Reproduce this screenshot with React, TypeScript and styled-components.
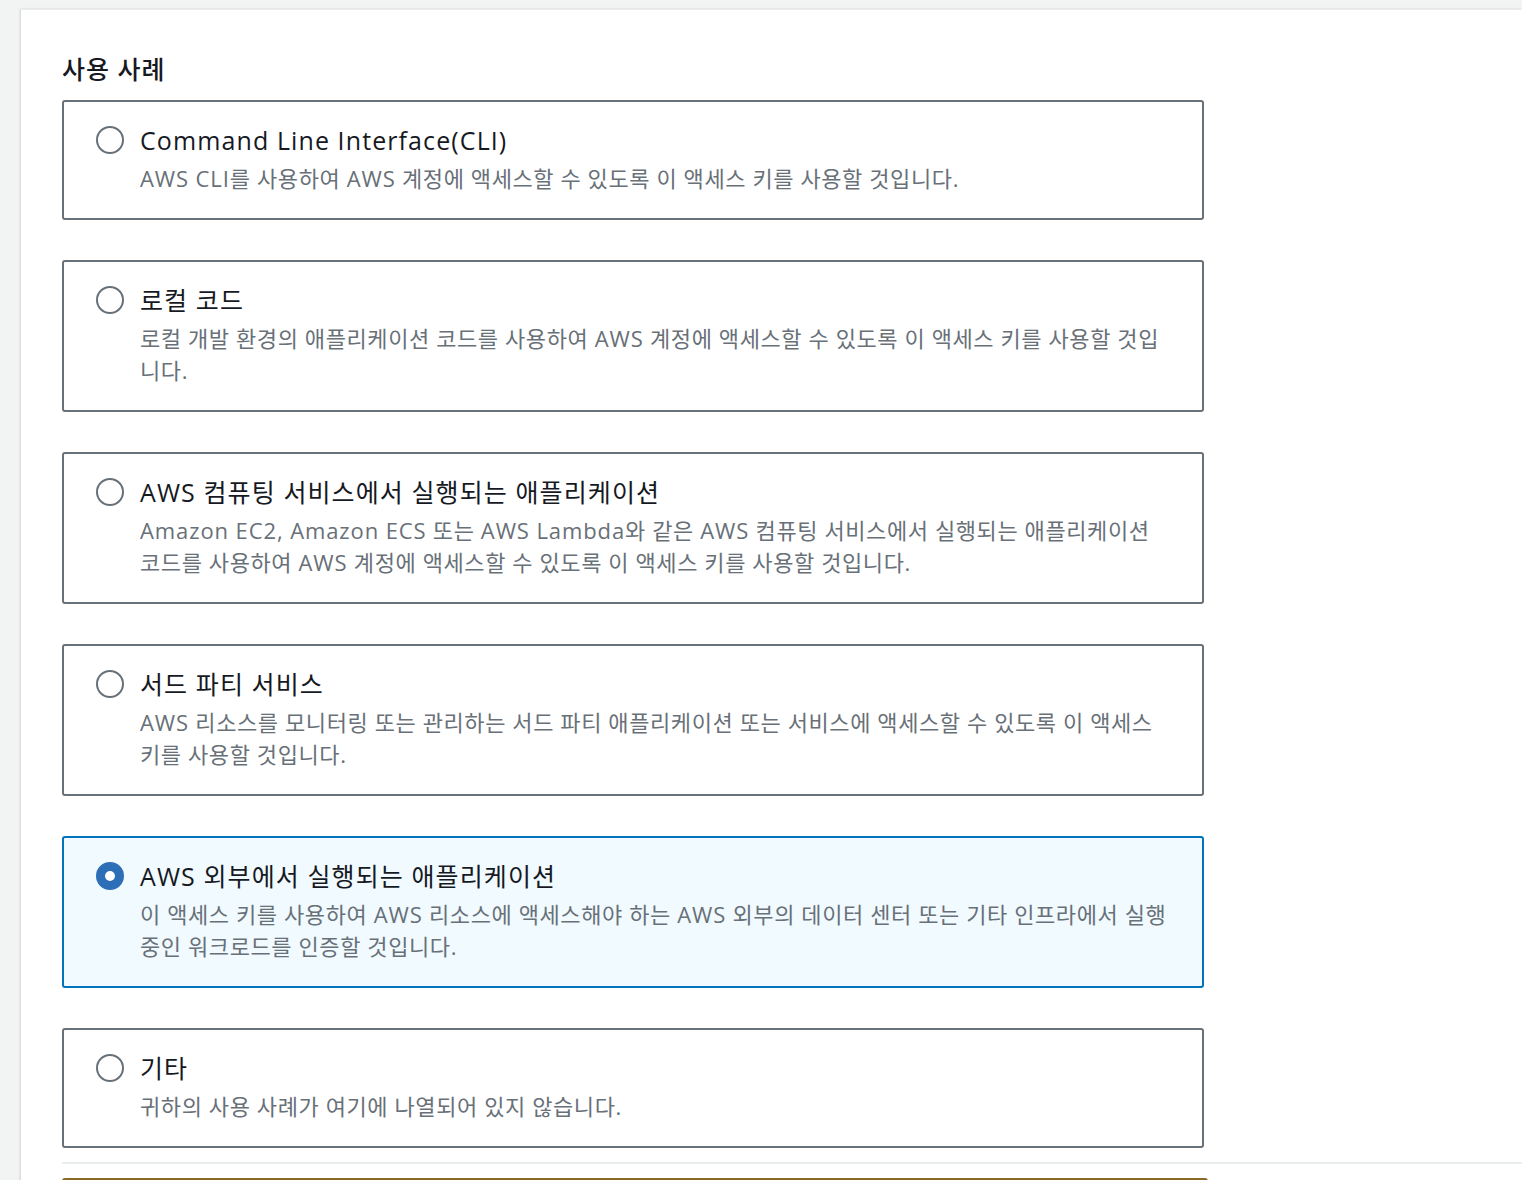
import styled, { createGlobalStyle } from 'styled-components';
import { useState } from 'react';

const GlobalStyle = createGlobalStyle`
  html, body {
    margin: 0;
    padding: 0;
    background: #f2f3f3;
  }
  body {
    font-family: "Open Sans", "Noto Sans CJK KR", sans-serif;
    color: #16191f;
  }
`;

const Page = styled.div`
  padding: 9px 0 0 21px;
  height: 1180px;
  overflow: hidden;
  box-sizing: border-box;
`;

const Panel = styled.section`
  background: #ffffff;
  border-top: 1px solid #eaeded;
  box-shadow: -1px 0 2px rgba(0, 31, 63, 0.15);
  padding: 42px 0 0 41px;
  min-height: 1200px;
`;

const Heading = styled.h2`
  margin: 0 0 14px;
  font-size: 25px;
  line-height: 34px;
  font-weight: 500;
  letter-spacing: 1px;
  color: #16191f;
`;

const TileList = styled.div`
  display: flex;
  flex-direction: column;
  gap: 40px;
  width: 1142px;
`;

const Tile = styled.label<{ $selected: boolean }>`
  display: flex;
  align-items: flex-start;
  gap: 16px;
  padding: 21px 32px 24px 32px;
  border: 2px solid ${(p) => (p.$selected ? '#0073bb' : '#687078')};
  border-radius: 3px;
  background: ${(p) => (p.$selected ? '#f1faff' : '#ffffff')};
  cursor: pointer;
`;

const Radio = styled.span<{ $checked: boolean }>`
  flex: none;
  width: 28px;
  height: 28px;
  margin-top: 3px;
  border-radius: 50%;
  box-sizing: border-box;
  border: ${(p) => (p.$checked ? '9px solid #2d6fb7' : '2px solid #687078')};
  background: #ffffff;
`;

const TileText = styled.div`
  display: flex;
  flex-direction: column;
  gap: 5px;
  width: 1029px;
`;

const TileTitle = styled.span`
  font-size: 25px;
  line-height: 34px;
  letter-spacing: 1.1px;
  color: #16191f;
`;

const TileDesc = styled.span`
  font-size: 22px;
  line-height: 32px;
  letter-spacing: 0.6px;
  color: #687078;
`;

// latin runs are a bit wider in the original font
const Latin = styled.span`
  letter-spacing: 0.9px;
`;

const Divider = styled.hr`
  margin: 14px 0 0;
  border: none;
  border-top: 2px solid #eaeded;
`;

const Alert = styled.div`
  margin-top: 14px;
  width: 1142px;
  height: 40px;
  border: 2px solid #8a6a22;
  border-radius: 3px;
  background: #fffce8;
`;

const options = [
  {
    id: 'cli',
    title: 'Command Line Interface(CLI)',
    desc: 'AWS CLI를 사용하여 AWS 계정에 액세스할 수 있도록 이 액세스 키를 사용할 것입니다.',
  },
  {
    id: 'local',
    title: '로컬 코드',
    desc: '로컬 개발 환경의 애플리케이션 코드를 사용하여 AWS 계정에 액세스할 수 있도록 이 액세스 키를 사용할 것입니다.',
  },
  {
    id: 'compute',
    title: 'AWS 컴퓨팅 서비스에서 실행되는 애플리케이션',
    desc: 'Amazon EC2, Amazon ECS 또는 AWS Lambda와 같은 AWS 컴퓨팅 서비스에서 실행되는 애플리케이션 코드를 사용하여 AWS 계정에 액세스할 수 있도록 이 액세스 키를 사용할 것입니다.',
  },
  {
    id: 'third',
    title: '서드 파티 서비스',
    desc: 'AWS 리소스를 모니터링 또는 관리하는 서드 파티 애플리케이션 또는 서비스에 액세스할 수 있도록 이 액세스 키를 사용할 것입니다.',
  },
  {
    id: 'outside',
    title: 'AWS 외부에서 실행되는 애플리케이션',
    desc: '이 액세스 키를 사용하여 AWS 리소스에 액세스해야 하는 AWS 외부의 데이터 센터 또는 기타 인프라에서 실행 중인 워크로드를 인증할 것입니다.',
  },
  {
    id: 'other',
    title: '기타',
    desc: '귀하의 사용 사례가 여기에 나열되어 있지 않습니다.',
  },
];

const renderDesc = (text: string) =>
  text
    .split(/([A-Za-z0-9][A-Za-z0-9, ]*[A-Za-z0-9,]|[A-Za-z0-9])/)
    .map((part, i) => (i % 2 === 1 ? <Latin key={i}>{part}</Latin> : part));

export default function App() {
  const [selected, setSelected] = useState('outside');

  return (
    <>
      <GlobalStyle />
      <Page>
        <Panel>
          <Heading>사용 사례</Heading>
          <TileList role="radiogroup">
            {options.map((o) => (
              <Tile key={o.id} $selected={selected === o.id} onClick={() => setSelected(o.id)}>
                <Radio $checked={selected === o.id} />
                <TileText>
                  <TileTitle>{o.title}</TileTitle>
                  <TileDesc>{renderDesc(o.desc)}</TileDesc>
                </TileText>
              </Tile>
            ))}
          </TileList>
          <Divider />
          <Alert />
        </Panel>
      </Page>
    </>
  );
}
